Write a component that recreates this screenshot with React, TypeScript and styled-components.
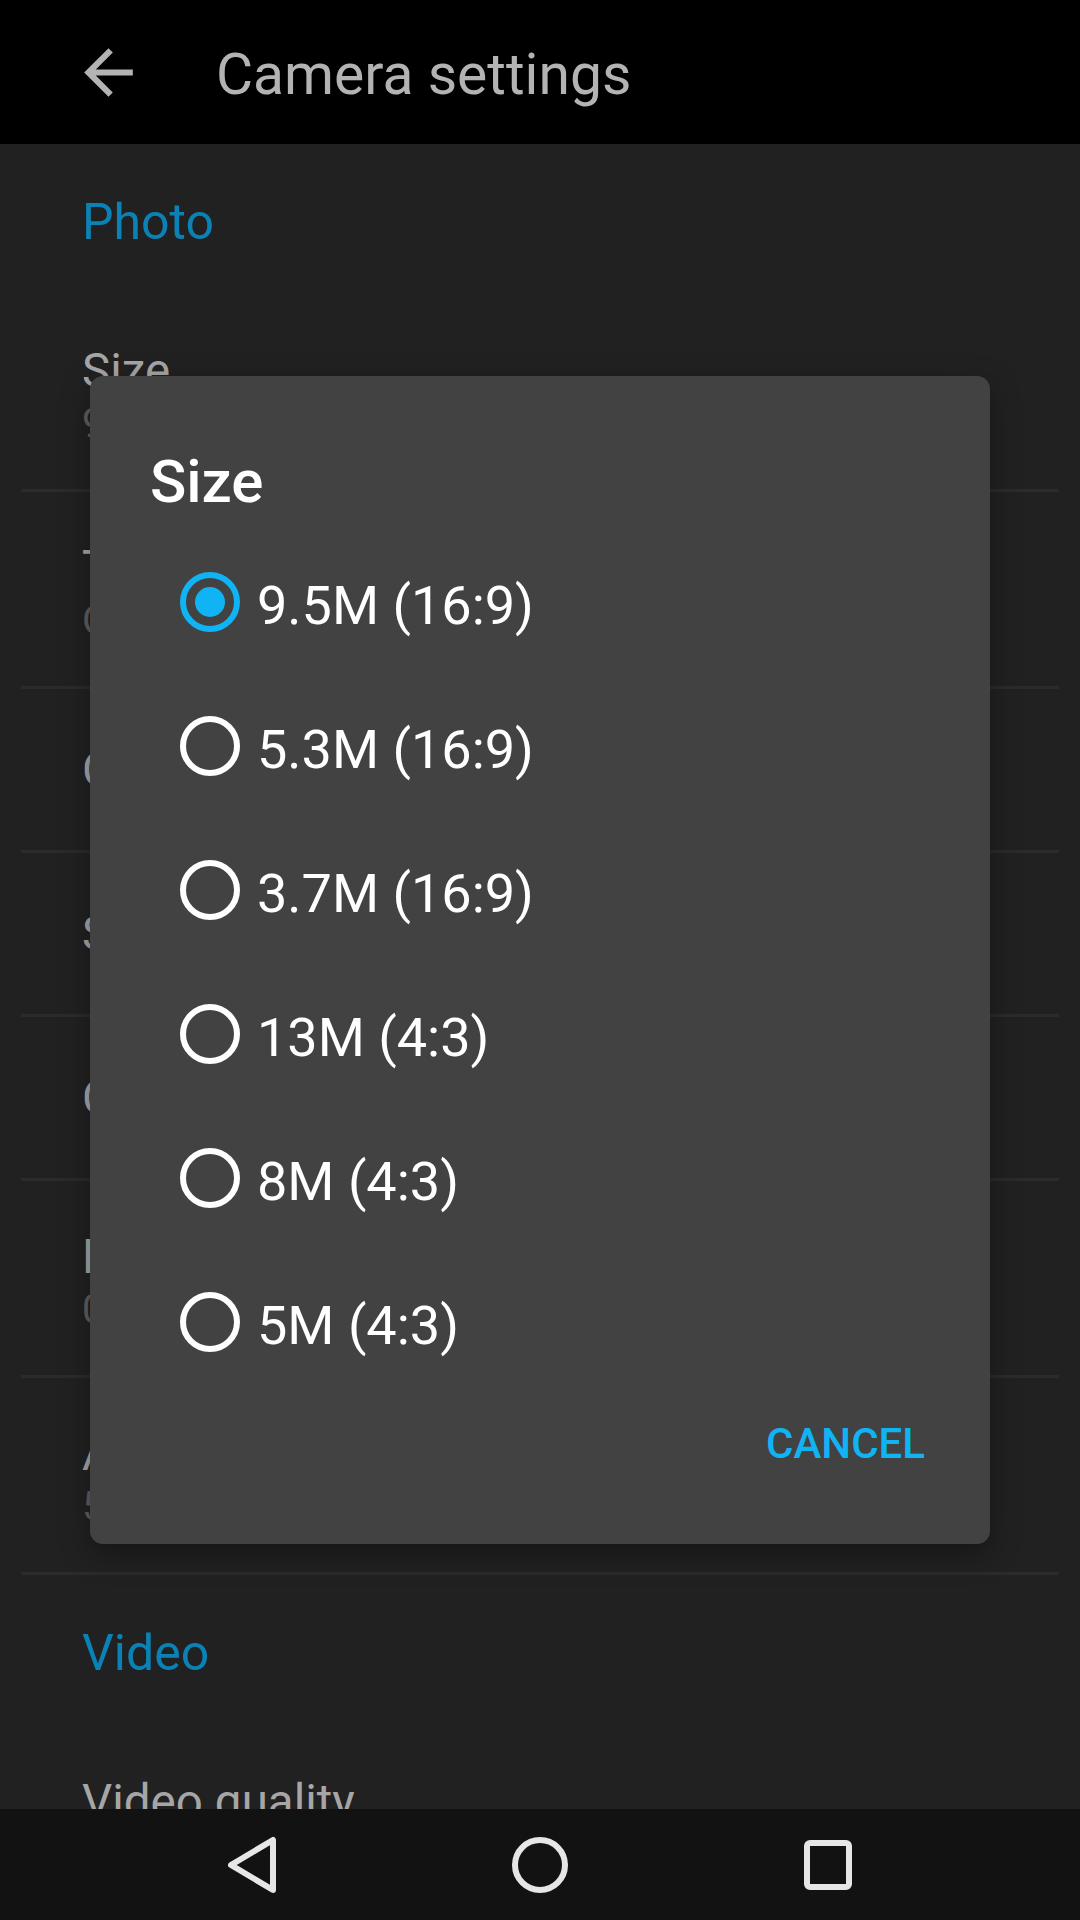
import React from "react";
import styled, { createGlobalStyle } from "styled-components";

const Global = createGlobalStyle`
  html, body {
    margin: 0;
    padding: 0;
    background: #212121;
  }
  body {
    font-family: Roboto, "Noto Sans", "Liberation Sans", sans-serif;
  }
  * { box-sizing: border-box; }
`;

const Screen = styled.div`
  position: relative;
  width: 1080px;
  height: 1920px;
  display: flex;
  flex-direction: column;
  background: #212121;
  overflow: hidden;
`;

const TopBar = styled.header`
  flex: 0 0 144px;
  height: 144px;
  background: #000;
  display: flex;
  align-items: center;
  padding-left: 72px;
  gap: 71px;
`;

const BackIcon = styled.svg`
  width: 73px;
  height: 73px;
  flex: 0 0 auto;
  fill: #b3b3b3;
`;

const AppTitle = styled.h1`
  margin: 0;
  padding-top: 5px;
  font-size: 57px;
  line-height: 144px;
  font-weight: 400;
  color: #b3b3b3;
  white-space: nowrap;
`;

const Content = styled.main`
  flex: 1 1 auto;
  overflow: hidden;
  display: flex;
  flex-direction: column;
`;

const CategoryHeader = styled.div`
  flex: 0 0 auto;
  height: 151px;
  padding: 48px 0 43px 82px;
  font-size: 50px;
  line-height: 60px;
  color: #0b82b5;
`;

const Pref = styled.div<{ $twoLine?: boolean; $last?: boolean }>`
  flex: 0 0 auto;
  margin: 0 21px;
  padding-left: 61px;
  height: ${(p) => (p.$twoLine ? 197 : 164)}px;
  padding-top: ${(p) => (p.$twoLine ? 50 : 55)}px;
  border-bottom: 3px solid ${(p) => (p.$last ? "transparent" : "#2b2b2b")};
  display: flex;
  flex-direction: column;
`;

const PrefTitle = styled.div`
  font-size: 47.5px;
  line-height: 52px;
  color: #a6a6a6;
  white-space: nowrap;
`;

const PrefSummary = styled.div`
  margin-top: 3px;
  font-size: 40px;
  line-height: 48px;
  color: #5f5f5f;
  white-space: nowrap;
`;

const NavBar = styled.nav`
  flex: 0 0 111px;
  height: 111px;
  background: #121212;
  display: flex;
  align-items: center;
  justify-content: center;
  gap: 228px;
`;

const NavIcon = styled.svg`
  width: 60px;
  height: 60px;
  fill: none;
  stroke: #e6e6e6;
  stroke-width: 6;
  stroke-linejoin: round;
`;

const Overlay = styled.div`
  position: absolute;
  inset: 0;
  display: flex;
  align-items: center;
  justify-content: center;
`;

const Dialog = styled.div`
  width: 900px;
  background: #424242;
  border-radius: 13px;
  box-shadow: 0 10px 30px rgba(0, 0, 0, 0.35);
  display: flex;
  flex-direction: column;
  padding-top: 70px;
  padding-bottom: 50px;
`;

const DialogTitle = styled.h2`
  margin: 0 0 12px;
  padding-left: 60px;
  font-size: 60px;
  line-height: 72px;
  font-weight: 500;
  color: #ffffff;
`;

const OptionList = styled.div`
  display: flex;
  flex-direction: column;
`;

const OptionRow = styled.div`
  height: 144px;
  padding-left: 90px;
  display: flex;
  align-items: center;
`;

const Radio = styled.span<{ $checked?: boolean }>`
  width: 60px;
  height: 60px;
  flex: 0 0 60px;
  border-radius: 50%;
  border: 6px solid ${(p) => (p.$checked ? "#10b4f5" : "#ffffff")};
  display: flex;
  align-items: center;
  justify-content: center;

  &::after {
    content: "";
    width: 30px;
    height: 30px;
    border-radius: 50%;
    background: #10b4f5;
    display: ${(p) => (p.$checked ? "block" : "none")};
  }
`;

const OptionLabel = styled.span`
  margin-left: 17px;
  padding-top: 7px;
  font-size: 54px;
  line-height: 60px;
  color: #ffffff;
  white-space: nowrap;
`;

const ButtonBar = styled.div`
  height: 100px;
  display: flex;
  justify-content: flex-end;
  align-items: center;
  padding-right: 65px;
`;

const TextButton = styled.button`
  border: 0;
  background: transparent;
  padding: 0;
  font-family: inherit;
  font-size: 42px;
  line-height: 100px;
  font-weight: 500;
  color: #10b4f5;
  letter-spacing: 0;
`;

const prefs: { title: string; summary?: string }[] = [
  { title: "Size", summary: "9.5M (16:9)" },
  { title: "Timer", summary: "Off" },
  { title: "Capture on touch" },
  { title: "Shutter sound" },
  { title: "Composition guides" },
  { title: "Exposure", summary: "0" },
  { title: "Anti-banding", summary: "50 Hz" },
];

const options = [
  "9.5M (16:9)",
  "5.3M (16:9)",
  "3.7M (16:9)",
  "13M (4:3)",
  "8M (4:3)",
  "5M (4:3)",
];

export default function App() {
  return (
    <>
      <Global />
      <Screen>
        <TopBar>
          <BackIcon viewBox="0 0 24 24">
            <path d="M20 11H7.83l5.59-5.59L12 4l-8 8 8 8 1.41-1.41L7.83 13H20v-2z" />
          </BackIcon>
          <AppTitle>Camera settings</AppTitle>
        </TopBar>
        <Content>
          <CategoryHeader>Photo</CategoryHeader>
          {prefs.map((p) => (
            <Pref key={p.title} $twoLine={!!p.summary}>
              <PrefTitle>{p.title}</PrefTitle>
              {p.summary && <PrefSummary>{p.summary}</PrefSummary>}
            </Pref>
          ))}
          <CategoryHeader>Video</CategoryHeader>
          <Pref $twoLine $last>
            <PrefTitle>Video quality</PrefTitle>
            <PrefSummary>HD 1080p</PrefSummary>
          </Pref>
        </Content>
        <NavBar>
          <NavIcon viewBox="0 0 60 60">
            <path d="M51 5 L51 55 L9 30 Z" />
          </NavIcon>
          <NavIcon viewBox="0 0 60 60">
            <circle cx="30" cy="30" r="25" />
          </NavIcon>
          <NavIcon viewBox="0 0 60 60">
            <rect x="9" y="8" width="42" height="44" rx="3" />
          </NavIcon>
        </NavBar>
        <Overlay>
          <Dialog>
            <DialogTitle>Size</DialogTitle>
            <OptionList>
              {options.map((o, i) => (
                <OptionRow key={o}>
                  <Radio $checked={i === 0} />
                  <OptionLabel>{o}</OptionLabel>
                </OptionRow>
              ))}
            </OptionList>
            <ButtonBar>
              <TextButton>CANCEL</TextButton>
            </ButtonBar>
          </Dialog>
        </Overlay>
      </Screen>
    </>
  );
}
